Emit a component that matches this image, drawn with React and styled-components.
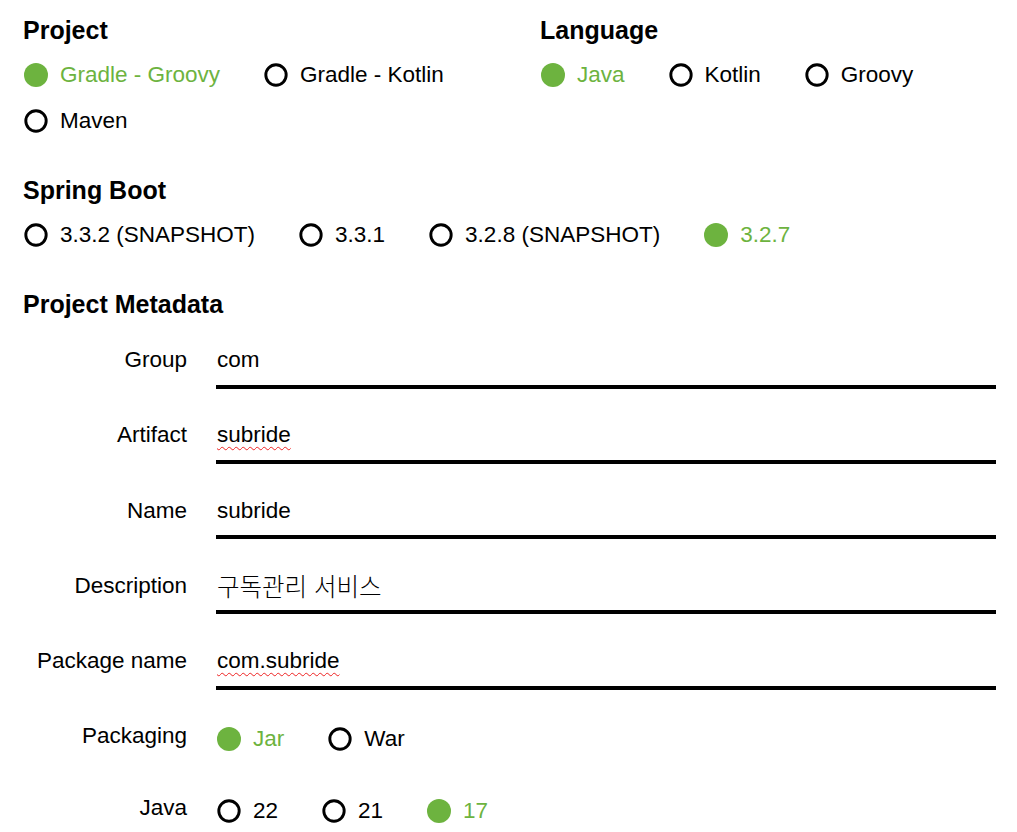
import React from "react";
import styled, { createGlobalStyle } from "styled-components";

const GREEN = "#6db33f";

const GlobalStyle = createGlobalStyle`
  html, body {
    margin: 0;
    padding: 0;
    overflow: hidden;
    background: #fff;
  }
  body {
    font-family: "Liberation Sans", Arial, "Noto Sans CJK KR", sans-serif;
    color: #000;
  }
`;

const Page = styled.div`
  display: flex;
  flex-direction: column;
  gap: 40px;
  padding: 15px 21px 0 23px;
`;

const TopGrid = styled.div`
  display: grid;
  grid-template-columns: 517px 1fr;
`;

const Section = styled.section`
  display: flex;
  flex-direction: column;
  gap: ${(props) => props.gap || 16}px;
`;

const Heading = styled.h2`
  margin: 0;
  font-size: 25px;
  font-weight: 700;
  line-height: 30px;
`;

const Options = styled.div`
  display: flex;
  flex-wrap: wrap;
  row-gap: 18px;
  column-gap: 43px;
  padding: ${(props) => (props.inField ? "3px 0 8px" : "0")};
`;

const Option = styled.label`
  display: flex;
  align-items: center;
  gap: 12px;
  font-size: 22.5px;
  line-height: 28px;
  color: ${(props) => (props.checked ? GREEN : "#000")};
  cursor: pointer;
`;

const Dot = styled.span`
  box-sizing: border-box;
  display: block;
  margin-left: 1px;
  width: 24px;
  height: 24px;
  border-radius: 50%;
  background: ${(props) => (props.checked ? GREEN : "transparent")};
  border: ${(props) => (props.checked ? "none" : "3px solid #000")};
  transform: ${(props) => (props.checked ? "none" : "scale(0.97)")};
`;

const Fields = styled.div`
  display: flex;
  flex-direction: column;
  gap: 32.7px;
`;

const FieldRow = styled.div`
  display: grid;
  grid-template-columns: 164px 1fr;
  column-gap: 29px;
  align-items: start;
`;

const FieldLabel = styled.div`
  text-align: right;
  font-size: 22.5px;
  line-height: 28px;
`;

const FieldInput = styled.div`
  font-size: 22.5px;
  line-height: 28px;
  padding: 0 0 10.6px 1px;
  border-bottom: 4px solid #000;
  white-space: nowrap;
`;

const Misspelled = styled.span`
  text-decoration: underline wavy #ee2222;
  text-decoration-thickness: 1px;
  text-underline-offset: 4px;
`;

const Hangul = styled.span`
  font-family: "Noto Sans CJK KR", sans-serif;
  font-size: 24.5px;
  font-weight: 300;
  vertical-align: top;
`;

const RadioGroup = ({ options, value, inField }) => (
  <Options inField={inField}>
    {options.map((opt) => (
      <Option key={opt} checked={opt === value}>
        <Dot checked={opt === value} />
        {opt}
      </Option>
    ))}
  </Options>
);

const TextField = ({ label, children }) => (
  <FieldRow>
    <FieldLabel>{label}</FieldLabel>
    <FieldInput>{children}</FieldInput>
  </FieldRow>
);

const RadioField = ({ label, options, value }) => (
  <FieldRow>
    <FieldLabel>{label}</FieldLabel>
    <RadioGroup options={options} value={value} inField />
  </FieldRow>
);

export default function App() {
  return (
    <>
      <GlobalStyle />
      <Page>
        <TopGrid>
          <Section>
            <Heading>Project</Heading>
            <RadioGroup
              options={["Gradle - Groovy", "Gradle - Kotlin", "Maven"]}
              value="Gradle - Groovy"
            />
          </Section>
          <Section>
            <Heading>Language</Heading>
            <RadioGroup options={["Java", "Kotlin", "Groovy"]} value="Java" />
          </Section>
        </TopGrid>
        <Section>
          <Heading>Spring Boot</Heading>
          <RadioGroup
            options={["3.3.2 (SNAPSHOT)", "3.3.1", "3.2.8 (SNAPSHOT)", "3.2.7"]}
            value="3.2.7"
          />
        </Section>
        <Section gap={27}>
          <Heading>Project Metadata</Heading>
          <Fields>
            <TextField label="Group">com</TextField>
            <TextField label="Artifact">
              <Misspelled>subride</Misspelled>
            </TextField>
            <TextField label="Name">subride</TextField>
            <TextField label="Description">
              <Hangul lang="ko">구독관리 서비스</Hangul>
            </TextField>
            <TextField label="Package name">
              <Misspelled>com.subride</Misspelled>
            </TextField>
            <RadioField label="Packaging" options={["Jar", "War"]} value="Jar" />
            <RadioField label="Java" options={["22", "21", "17"]} value="17" />
          </Fields>
        </Section>
      </Page>
    </>
  );
}
